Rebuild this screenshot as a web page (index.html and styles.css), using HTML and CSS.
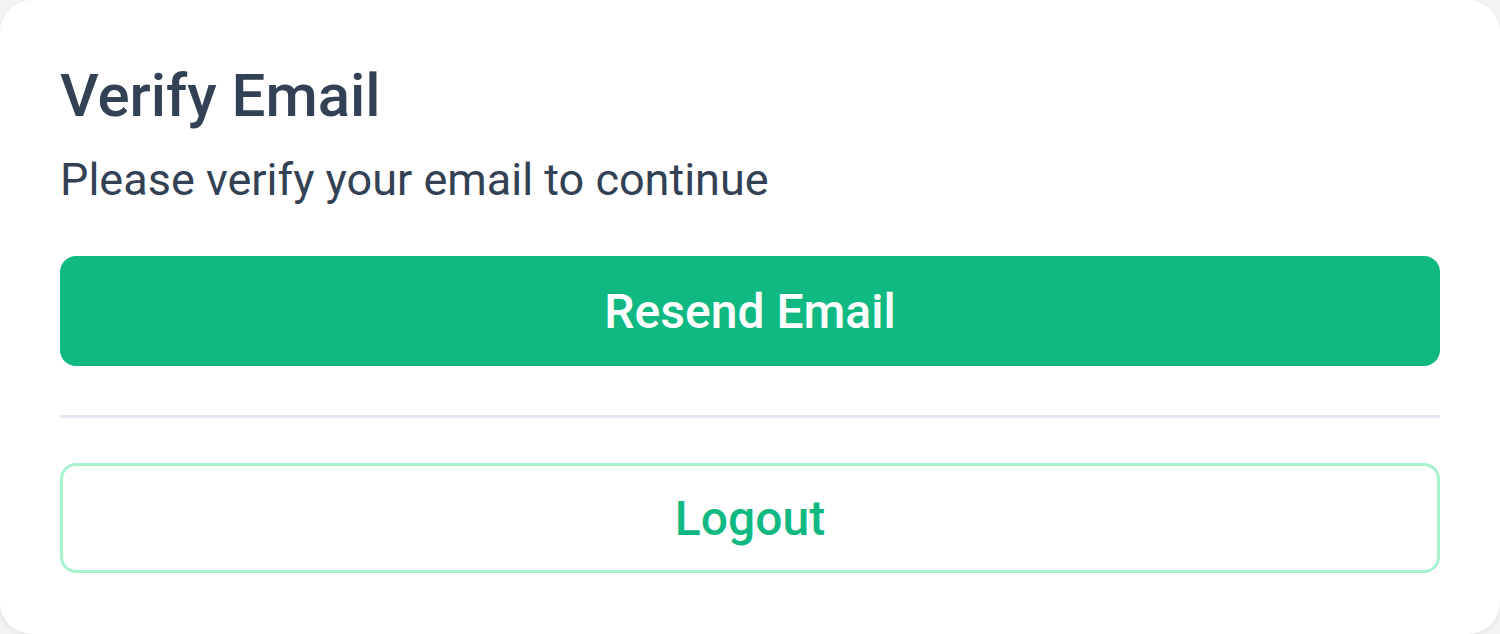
FILE: index.html
```html
<!DOCTYPE html>
<html>
<head>
<meta charset="utf-8">
<link rel="stylesheet" href="styles.css">
</head>
<body>
<div class="card">
  <h1 class="title">Verify Email</h1>
  <p class="subtitle">Please verify your email to continue</p>
  <button class="btn btn-primary">Resend Email</button>
  <hr class="divider">
  <button class="btn btn-outline">Logout</button>
</div>
</body>
</html>
```
FILE: styles.css
```css
html, body {
  margin: 0;
  padding: 0;
  background: #f3f4f6;
  width: 1500px;
  height: 634px;
  overflow: hidden;
}
body {
  font-family: Roboto, "Noto Sans", sans-serif;
}
.card {
  box-sizing: border-box;
  width: 1500px;
  height: 634px;
  background: #ffffff;
  border-radius: 32px;
  box-shadow: 0 2px 6px rgba(0,0,0,0.08);
  padding: 56px 60px 60px;
  display: flex;
  flex-direction: column;
}
.title {
  margin: 0;
  font-size: 60px;
  font-weight: 500;
  line-height: 80px;
  color: #334155;
}
.subtitle {
  margin: 17px 0 0;
  font-size: 45px;
  font-weight: 400;
  line-height: 54px;
  color: #334155;
}
.btn {
  box-sizing: border-box;
  width: 100%;
  height: 110px;
  font-family: Roboto, "Noto Sans", sans-serif;
  font-size: 48px;
  font-weight: 500;
  border-radius: 16px;
  cursor: pointer;
}
.btn-primary {
  margin-top: 49px;
  background: #10b981;
  color: #ffffff;
  border: none;
}
.divider {
  margin: 49px 0 0;
  border: none;
  height: 3px;
  background: #e4e7f1;
}
.btn-outline {
  margin-top: 45px;
  background: #ffffff;
  color: #10b981;
  border: 3px solid #a7f3d0;
}
```
